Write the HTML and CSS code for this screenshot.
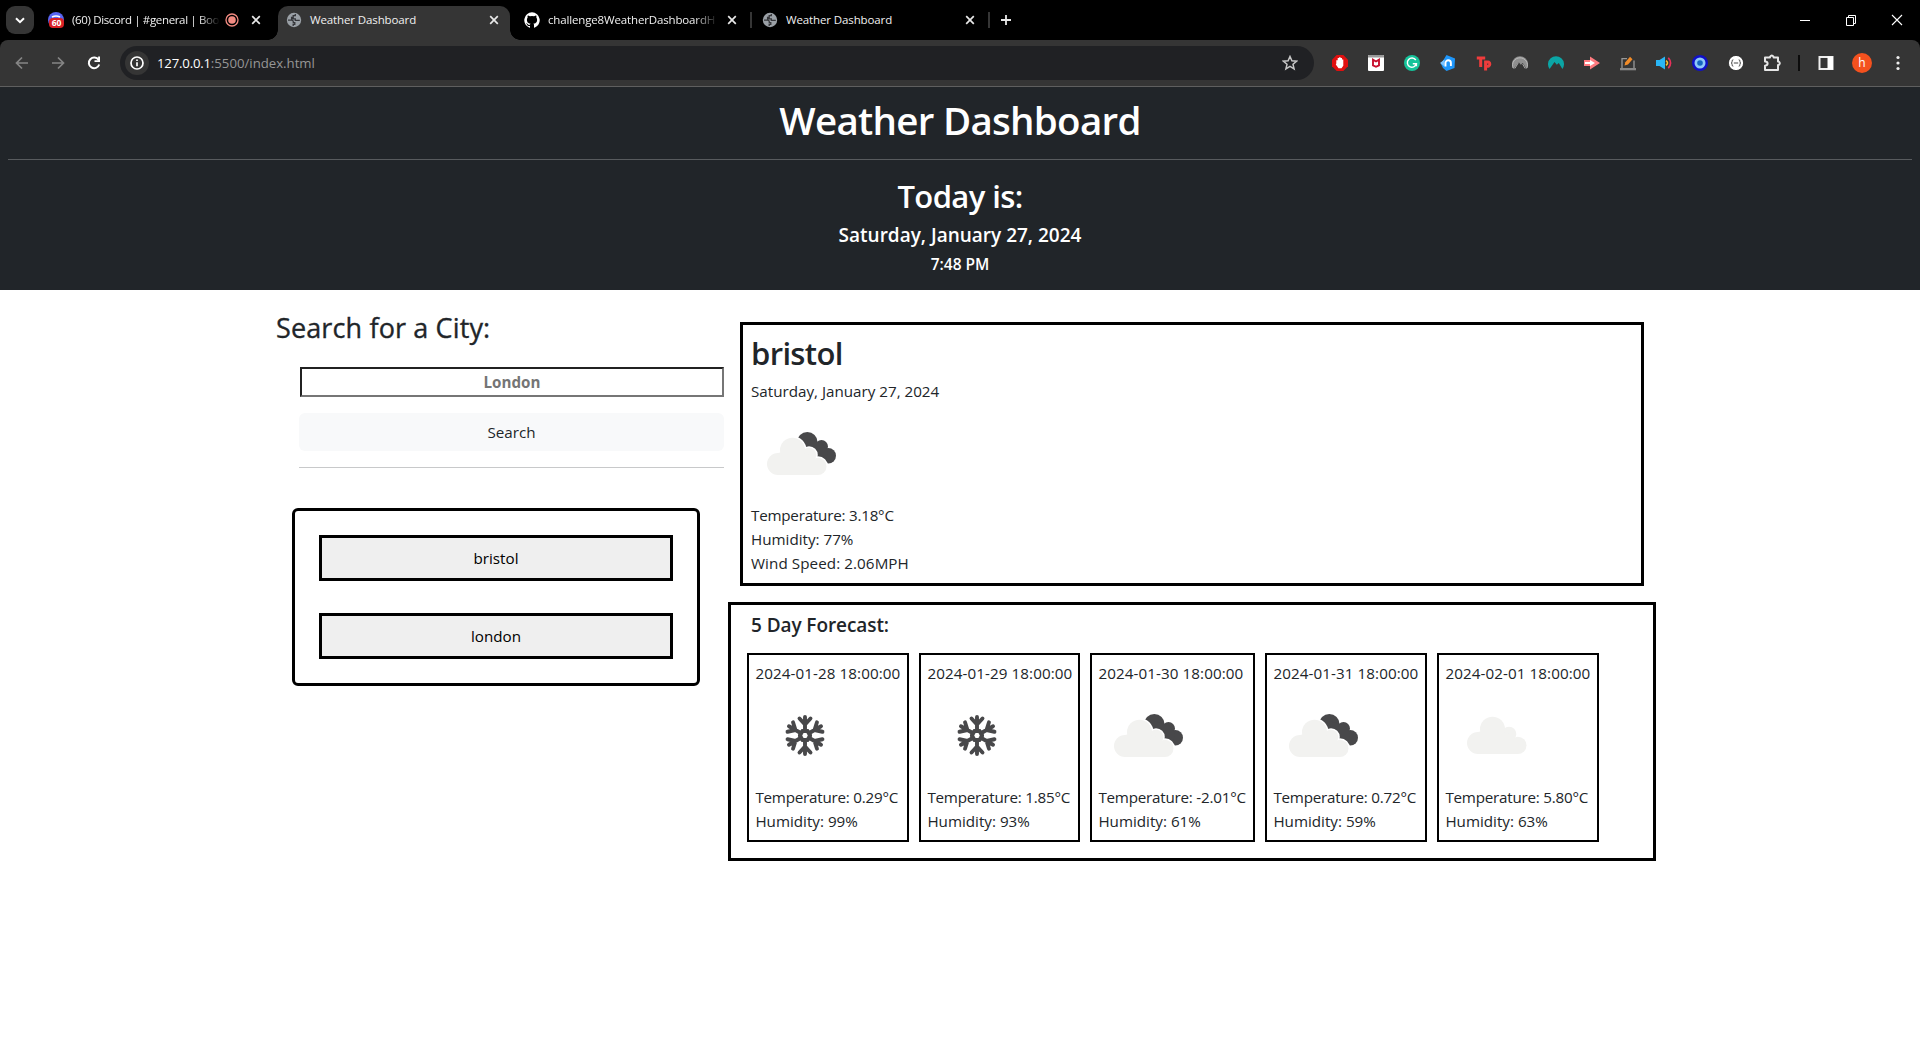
FILE: index.html
```html
<!DOCTYPE html>
<html lang="en">
<head>
<meta charset="utf-8">
<title>Weather Dashboard</title>
<link rel="stylesheet" href="styles.css">
</head>
<body>
<svg class="defs" width="0" height="0">
  <symbol id="close" viewBox="0 0 10 10"><path d="M1.2 1.2 8.8 8.8M8.8 1.2 1.2 8.8" fill="none" stroke="#e8e8e8" stroke-width="1.7"/></symbol>
  <symbol id="globe" viewBox="0 0 16 16"><circle cx="8" cy="8" r="7.200" fill="#9aa0a6"/><path d="M2 8.200h3.500q1.800 0 1.800 1.500v1h1.500v1.600H7.200v1.800M9.300 2v1.700H7.200v1.800H5.600v1.300h3.700v1.500h4.500" fill="none" stroke="#35363a" stroke-width="1.300"/></symbol>
  <symbol id="cloud" viewBox="0 0 100 100">
    <g transform="translate(6 -3)" fill="#f2f2f0"><use href="#puffs"/></g>
  </symbol>
  <g id="puffs"><circle cx="27" cy="61" r="11"/><circle cx="41.500" cy="47.200" r="12.500"/><circle cx="58" cy="52" r="7.300"/><circle cx="66.900" cy="63.400" r="8.600"/><path d="M27 72V50l14.500-3L58 52l9 6v14z"/></g>
  <symbol id="clouds" viewBox="0 0 100 100">
    <g fill="#48484a"><circle cx="56.300" cy="39.300" r="10.300"/><circle cx="70.500" cy="43.500" r="6.500"/><circle cx="77.300" cy="52.700" r="7.700"/><path d="M56 36l14.500 4L77 48l-2 12-16-8z"/></g>
    <g fill="#fff" stroke="#fff" stroke-width="3"><use href="#puffs"/></g>
    <g fill="#f2f2f0"><use href="#puffs"/></g>
  </symbol>
  <symbol id="snow" viewBox="0 0 100 100">
    <g fill="none" stroke="#48484a" stroke-width="3.900" stroke-linecap="round" stroke-linejoin="round">
      <g id="arm"><path d="M50 46V32M44.500 33.500 50 39.500l5.500-6M47.500 46.100h5"/></g>
      <use href="#arm" transform="rotate(60 50 50.500)"/><use href="#arm" transform="rotate(120 50 50.500)"/><use href="#arm" transform="rotate(180 50 50.500)"/><use href="#arm" transform="rotate(240 50 50.500)"/><use href="#arm" transform="rotate(300 50 50.500)"/>
    </g>
  </symbol>
</svg>

<div class="browser">
  <div class="tabstrip">
    <div class="tab-search"><svg width="10" height="7" viewBox="0 0 10 7"><path d="M1 1.200 5 5.200l4-4" fill="none" stroke="#fff" stroke-width="2"/></svg></div>
    <div class="tab">
      <svg class="fav" viewBox="0 0 16 16"><circle cx="8" cy="8" r="8" fill="#5865f2"/><path d="M4 5q4-2 8 0" stroke="#fff" stroke-width="1.500" fill="none"/><rect x="1" y="6" width="15" height="10" rx="4" fill="#d92025"/><text x="8.500" y="14.300" class="badge">60</text></svg>
      <span class="tab-title fade t1">(60) Discord | #general | Boo</span>
      <svg class="rec" viewBox="0 0 14 14"><circle cx="7" cy="7" r="6" fill="none" stroke="#f28b82" stroke-width="1.300"/><circle cx="7" cy="7" r="3.800" fill="#f28b82"/></svg>
      <svg class="x"><use href="#close"/></svg>
    </div>
    <div class="tab active">
      <svg class="fav"><use href="#globe"/></svg><span class="tab-title t2">Weather Dashboard</span><svg class="x"><use href="#close"/></svg>
    </div>
    <div class="tab sep">
      <svg class="fav" viewBox="0 0 16 16"><path fill="#fff" d="M8 .2a8 8 0 0 0-2.500 15.500c.4.100.5-.2.500-.4v-1.400c-2.200.5-2.700-1-2.700-1-.4-.9-.9-1.200-.9-1.200-.7-.5.100-.5.100-.5.800.100 1.200.8 1.200.8.700 1.200 1.900.9 2.300.7.100-.5.300-.9.500-1.100-1.800-.2-3.600-.9-3.600-3.900 0-.9.300-1.600.8-2.200-.100-.2-.4-1 .100-2.100 0 0 .7-.2 2.200.8a7.500 7.500 0 0 1 4 0c1.500-1 2.200-.8 2.200-.8.4 1.100.2 1.900.1 2.100.5.600.8 1.300.8 2.200 0 3.100-1.900 3.700-3.700 3.900.3.300.6.800.6 1.500v2.200c0 .2.100.5.500.4A8 8 0 0 0 8 .2z"/></svg>
      <span class="tab-title fade t3">challenge8WeatherDashboardH</span><svg class="x"><use href="#close"/></svg>
    </div>
    <div class="tab sep">
      <svg class="fav"><use href="#globe"/></svg><span class="tab-title t2">Weather Dashboard</span><svg class="x"><use href="#close"/></svg>
    </div>
    <svg class="plus" viewBox="0 0 10 10"><path d="M5 0v10M0 5h10" stroke="#e8e8e8" stroke-width="1.800"/></svg>
    <div class="winctl">
      <svg viewBox="0 0 12 12"><path d="M1 6.500h10" stroke="#fff"/></svg>
      <svg viewBox="0 0 12 12"><path d="M1.500 3.500h7v8h-7zM3.500 3.500v-2h7v8h-2" fill="none" stroke="#fff"/></svg>
      <svg viewBox="0 0 12 12"><path d="M1 1l10 10M11 1 1 11" stroke="#fff" stroke-width="1.100"/></svg>
    </div>
  </div>

  <div class="toolbar">
    <div class="nav">
      <svg viewBox="0 0 16 16"><path d="M14 8H3M8 2.500 2.500 8 8 13.500" fill="none" stroke="#858585" stroke-width="1.700"/></svg>
      <svg viewBox="0 0 16 16"><path d="M2 8h11M8 2.500 13.500 8 8 13.500" fill="none" stroke="#858585" stroke-width="1.700"/></svg>
      <svg viewBox="0 0 16 16"><path d="M12.600 5A5.300 5.300 0 1 0 13.200 9.500" fill="none" stroke="#fff" stroke-width="2"/><path d="M14 1.500V7H8.500V5.200h3.600V1.500z" fill="#fff"/></svg>
    </div>
    <div class="omnibox">
      <span class="info"><svg width="14" height="14" viewBox="0 0 14 14"><circle cx="7" cy="7" r="6" fill="none" stroke="#fff" stroke-width="1.700"/><path d="M7 6.200v4M7 3.400v1.600" stroke="#fff" stroke-width="1.700"/></svg></span>
      <span class="url"><span class="host">127.0.0.1</span><span class="path">:5500/index.html</span></span>
      <svg class="star" viewBox="0 0 16 16"><path d="M8 1.500l1.900 4.300 4.700.4-3.600 3.100 1.100 4.600L8 11.400l-4.100 2.500L5 9.300 1.400 6.200l4.700-.4z" fill="none" stroke="#c7c7c7" stroke-width="1.500"/></svg>
    </div>
    <div class="exts">
      <svg viewBox="0 0 16 16"><path d="M4.700 0h6.600L16 4.700v6.600L11.300 16H4.700L0 11.300V4.700z" fill="#e01010"/><path d="M4.300 8.500V5.200h1.400V3h1.400v-.8h1.500V3H10v1.500h1.300v6.200L9.500 13.300h-3L3.800 9.500z" fill="#fff"/></svg>
      <svg viewBox="0 0 16 16"><rect width="16" height="16" rx="1" fill="#fff"/><path d="M0 1q0-1 1-1h14q1 0 1 1v1.500H0z" fill="#999"/><path d="M5 4.700v5.600l3 1.500 3-1.500V4.700L8 6.500z" fill="none" stroke="#c8102e" stroke-width="1.900"/></svg>
      <svg viewBox="0 0 16 16"><circle cx="8" cy="8" r="8" fill="#15c39a"/><path d="M11.800 5A4.600 4.600 0 1 0 12.400 8.800H8.800M12.400 8.500v2.800" fill="none" stroke="#fff" stroke-width="1.400"/></svg>
      <svg viewBox="0 0 16 16"><path d="M6.500 0l8.500 3.500-.5 9.500L6.500 16 3 13 1 9z" fill="#1e96fa"/><path d="M0 8 4.500 4.500V11.500z" fill="#7cc4ff"/><path d="M5.500 11.500V8a2.700 2.700 0 0 1 5.400 0v3" fill="none" stroke="#fff" stroke-width="1.900"/></svg>
      <svg viewBox="0 0 16 16"><path d="M.8 3h8.400M4.700 3v9M9.600 5.500V15.500M9.600 7.500q4.200-1.500 4.200 1.600-.2 3-4.200 1.900" fill="none" stroke="#f03c3c" stroke-width="3"/></svg>
      <svg viewBox="0 0 16 16"><path d="M1.600 14A8 8 0 1 1 14.400 14L10.800 8 8.800 9.700 8 8.700 6.500 7z" fill="#8f8f8f"/><path d="M1 13A7.500 7.500 0 1 1 15 13M2.800 13.500l3.700-6M13.200 13.500l-2.600-4.500" fill="none" stroke="#c4c4c4" stroke-width=".8"/></svg>
      <svg viewBox="0 0 16 16"><path d="M1.600 14A8 8 0 1 1 14.400 14L10.800 8 8.800 9.700 8 8.700 6.500 7z" fill="#0ba5a5"/></svg>
      <svg viewBox="0 0 16 16"><path d="M6 1.500 16 8 6 14.500V11H0V5h6z" fill="#ff7b80"/><path d="M6 5l5 3-5 3zM1 7h6v2H1z" fill="#fff"/></svg>
      <svg viewBox="0 0 16 16"><path d="M2 13V3.700h5M14 5.500v7.500" fill="none" stroke="#999" stroke-width="1.300"/><path d="M0 13h16v2.300H0z" fill="#888"/><path d="M4.500 10.500l.8-3.300L10 1.800l2.500 2.400L8 9.500z" fill="#f28c28"/></svg>
      <svg viewBox="0 0 16 16"><path d="M0 5h3.500L9 1.500v13L3.500 11H0z" fill="#29b6f6"/><path d="M10 5.700q3 2.300 0 4.600" fill="none" stroke="#fbc02d" stroke-width="1.600"/><path d="M12.300 2.800q4.500 5.200 0 10.400" fill="none" stroke="#e8305a" stroke-width="1.700"/></svg>
      <svg viewBox="0 0 16 16"><circle cx="8" cy="8" r="8" fill="#1010c8"/><circle cx="8" cy="8" r="5.500" fill="#8ec8f8"/><circle cx="8" cy="8" r="2.800" fill="#1565c0"/></svg>
      <svg viewBox="0 0 16 16"><circle cx="8" cy="8" r="7.600" fill="#fff" stroke="#222" stroke-width=".8"/><path d="M5.300 4.800q-1.500 0-1.200 1.700.2 1.400-.9 1.500 1.100.1.900 1.500-.3 1.700 1.200 1.700M10.700 4.800q1.500 0 1.200 1.700-.2 1.400.9 1.500-1.100.1-.9 1.500.3 1.700-1.200 1.700M5.800 8h4.400" fill="none" stroke="#444" stroke-width="1"/></svg>
      <svg class="puzzle" viewBox="0 0 18 18"><path d="M2 3.500h5V2.800q1.800-2.400 3.600 0v.7H15v4h.7q2.200 1.700 0 3.500H15v5H2v-4.300q2.600-.3 2.600-2.200T2 7.600z" fill="none" stroke="#e6e6e6" stroke-width="2" stroke-linejoin="round"/></svg>
    </div>
    <span class="bar"></span>
    <div class="end">
      <svg viewBox="0 0 16 16"><rect x="1.500" y="2" width="13" height="12" fill="none" stroke="#eee" stroke-width="2"/><path d="M9.500 1.500H15V14.500H9.500z" fill="#fff"/></svg>
      <span class="avatar">h</span>
      <svg viewBox="0 0 16 16"><circle cx="8" cy="2.500" r="1.600" fill="#eee"/><circle cx="8" cy="8" r="1.600" fill="#eee"/><circle cx="8" cy="13.500" r="1.600" fill="#eee"/></svg>
    </div>
  </div>
</div>

<header class="page-header">
  <h1>Weather Dashboard</h1>
  <hr>
  <h2 class="today">Today is:</h2>
  <h5 class="today-date">Saturday, January 27, 2024</h5>
  <h6 class="today-time">7:48 PM</h6>
</header>

<main class="content">
  <aside class="sidebar">
    <h3>Search for a City:</h3>
    <form class="search-form">
      <input type="text" placeholder="London">
      <button class="search-btn" type="button">Search</button>
      <hr>
    </form>
    <div class="history">
      <button type="button">bristol</button>
      <button type="button">london</button>
    </div>
  </aside>
  <section class="results">
    <article class="current">
      <h2>bristol</h2>
      <p>Saturday, January 27, 2024</p>
      <svg class="weather"><use href="#clouds"/></svg>
      <p class="temp">Temperature: 3.18°C</p>
      <p>Humidity: 77%</p>
      <p class="wind">Wind Speed: 2.06MPH</p>
    </article>
    <section class="forecast">
      <h5>5 Day Forecast:</h5>
      <div class="days">
        <article><p class="stamp">2024-01-28 18:00:00</p><svg class="weather"><use href="#snow"/></svg><p class="temp">Temperature: 0.29°C</p><p>Humidity: 99%</p></article>
        <article><p class="stamp">2024-01-29 18:00:00</p><svg class="weather"><use href="#snow"/></svg><p class="temp">Temperature: 1.85°C</p><p>Humidity: 93%</p></article>
        <article><p class="stamp">2024-01-30 18:00:00</p><svg class="weather"><use href="#clouds"/></svg><p class="temp">Temperature: -2.01°C</p><p>Humidity: 61%</p></article>
        <article><p class="stamp">2024-01-31 18:00:00</p><svg class="weather"><use href="#clouds"/></svg><p class="temp">Temperature: 0.72°C</p><p>Humidity: 59%</p></article>
        <article><p class="stamp">2024-02-01 18:00:00</p><svg class="weather"><use href="#cloud"/></svg><p class="temp">Temperature: 5.80°C</p><p>Humidity: 63%</p></article>
      </div>
    </section>
  </section>
</main>
</body>
</html>
```
FILE: styles.css
```css
* { box-sizing: border-box; }
body {
  margin: 0;
  background: #fff;
  color: #212529;
  font: 400 15.2px/24px "Open Sans", "Noto Sans", sans-serif;
}
h1, h2, h3, h5, h6, p { margin: 0; font-weight: 600; }
p { font-weight: 400; }
svg { display: block; flex: none; }
.defs { position: absolute; }

/* Browser window */
.browser { background: #000; font-family: "Open Sans", sans-serif; }
.tabstrip { display: flex; height: 40px; align-items: flex-end; padding-left: 6px; }
.tab-search {
  display: flex; align-items: center; justify-content: center;
  width: 28px; height: 28px; margin: 0 6px 6px 0; border-radius: 9px; background: #353535;
}
.tab {
  position: relative; display: flex; align-items: center;
  width: 232px; height: 34px; margin-right: 6px; padding: 0 11px 6px 8px;
  color: #f0f0f0; font-size: 11.500px; line-height: 18px;
}
.tab.active { background: #353535; border-radius: 10px 10px 0 0; }
.tab.active::before, .tab.active::after {
  content: ""; position: absolute; bottom: 0; width: 10px; height: 10px;
}
.tab.active::before { left: -10px; background: radial-gradient(circle at 0 0, transparent 9.500px, #353535 10px); }
.tab.active::after { right: -10px; background: radial-gradient(circle at 100% 0, transparent 9.500px, #353535 10px); }
.tab.sep::after { content: ""; position: absolute; right: -4px; top: 6px; width: 2px; height: 16px; background: #353535; }
.fav { width: 16px; height: 16px; margin-right: 8px; }
.badge { font: 700 8.500px "Open Sans", sans-serif; fill: #fff; text-anchor: middle; }
.tab-title { flex: 1; min-width: 0; white-space: nowrap; }
.fade { -webkit-mask-image: linear-gradient(90deg, #000 86%, transparent); mask-image: linear-gradient(90deg, #000 86%, transparent); }
.t1 { margin-right: 5px; letter-spacing: -.35px; }
.t2 { letter-spacing: -.12px; }
.t3 { margin-right: 9px; letter-spacing: -.15px; }
.rec { width: 14px; height: 14px; margin-right: 12px; }
.x { width: 10px; height: 10px; }
.plus { width: 10px; height: 10px; margin: 0 0 15px 9px; }
.winctl { display: flex; margin-left: auto; height: 40px; padding-right: 17px; align-items: center; gap: 34px; }
.winctl svg { width: 12px; height: 12px; }
.toolbar {
  display: flex; align-items: center; height: 47px; padding-left: 14px;
  border-bottom: 1px solid #5f5f5f; border-radius: 8px 8px 0 0; background: #353535;
}
.nav { display: flex; gap: 20px; }
.nav svg, .exts svg, .end svg { width: 16px; height: 16px; }
.omnibox {
  display: flex; align-items: center; width: 1194px; height: 34px; margin-left: 18px; padding: 0 16px 0 5px;
  border-radius: 17px; background: #202124; color: #fff; font-size: 13.200px;
}
.info { display: flex; align-items: center; justify-content: center; width: 24px; height: 24px; border-radius: 50%; background: #353535; }
.url { flex: 1; margin-left: 8px; }
.host { letter-spacing: -.2px; }
.path { color: #969696; }
.star { width: 16px; height: 16px; }
.exts { display: flex; align-items: center; gap: 20px; margin-left: 18px; }
.exts .puzzle { width: 18px; height: 18px; margin: 0 -1px; }
.bar { width: 2px; height: 16px; margin-left: 18px; background: #0c0c0c; }
.end { display: flex; align-items: center; gap: 18px; margin-left: 18px; }
.avatar { width: 20px; height: 20px; border-radius: 50%; background: #f4511e; color: #fff; font-size: 12px; line-height: 19px; text-align: center; }

/* Page header */
.page-header { height: 203px; padding: 9px 8px 0; background: #212529; color: #fff; text-align: center; }
.page-header h1 { font-size: 38.500px; line-height: 48px; letter-spacing: -.72px; }
.page-header hr { height: 1px; margin: 15px 0 17px; border: 0; background: #585b5e; }
.today { font-size: 31px; line-height: 38.400px; margin-bottom: 8px; letter-spacing: -.6px; }
.today-date { font-size: 19px; line-height: 24px; margin-bottom: 8px; }
.today-time { font-size: 15.500px; line-height: 19.200px; }

/* Search and history */
.content { display: flex; padding-left: 276px; }
.sidebar { width: 452px; padding-top: 21px; }
.sidebar h3 { font-size: 27px; line-height: 33.600px; font-weight: 500; letter-spacing: .13px; -webkit-text-stroke: .35px #212529; }
.search-form { width: 425px; margin: 22px 0 0 23px; }
.search-form input {
  display: block; width: 424px; height: 30px; margin: 0 0 16px 1px; padding: 1px 2px;
  border: 2px inset #767676; border-radius: 0; background: #fff;
  font: 700 15.200px "Open Sans", sans-serif; text-align: center;
}
.search-form input::placeholder { color: #757575; }
.search-btn {
  display: block; width: 425px; height: 38px; padding: 0; border: 0; border-radius: 6px;
  background: #f8f9fa; color: #212529; font: inherit;
}
.search-form hr { height: 1px; margin: 16px 0 0; border: 0; background: #c8c9ca; }
.history {
  display: flex; flex-direction: column; gap: 32px; width: 408px; height: 178px;
  margin: 40px 0 0 16px; padding: 24px; border: 3px solid #000; border-radius: 6px;
}
.history button { height: 46px; padding: 0; border: 3px solid #000; background: #efefef; color: #000; font: inherit; }

/* Weather results */
.results { width: 928px; padding-top: 32px; }
.current { width: 904px; height: 264px; margin: 0 12px 16px; padding: 9px 8px 0; border: 3px solid #000; }
.current h2 { font-size: 31px; line-height: 38.400px; margin-bottom: 6.600px; letter-spacing: -.65px; }
.temp { letter-spacing: -.22px; }
.wind { letter-spacing: .08px; }
.stamp { letter-spacing: .09px; }
.weather { width: 100px; height: 100px; }
.forecast { height: 259px; padding: 8px 16px; border: 3px solid #000; }
.forecast h5 { margin: 0 0 16px 4px; font-size: 19px; line-height: 24px; letter-spacing: -.08px; }
.days { display: grid; grid-template-columns: 162px 161px 165px 162px 162px; gap: 10px; }
.days article { height: 189px; padding: 6px 0 0 6.400px; border: 2px solid #000; white-space: nowrap; }
```
